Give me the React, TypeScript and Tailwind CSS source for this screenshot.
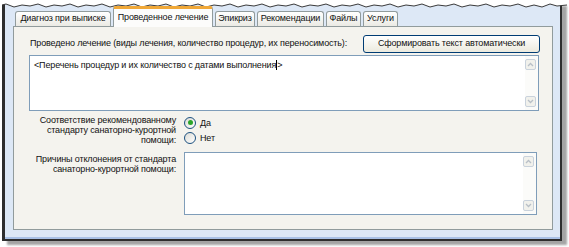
import React from "react";

const font = { fontFamily: '"Liberation Sans", Arial, sans-serif', letterSpacing: "-0.15px" };

function ScrollArrows() {
  return (
    <div className="w-[13px] flex flex-col justify-between py-[3px] pr-[1px] bg-[#fbfbf9]">
      <div className="w-[11px] h-[11px] rounded-[2px] border border-[#c9d2dc] bg-[#f1f1ec] flex items-center justify-center">
        <svg width="7" height="5" viewBox="0 0 7 5">
          <polyline points="1,4 3.5,1.5 6,4" fill="none" stroke="#b8bfc7" strokeWidth="1.3" />
        </svg>
      </div>
      <div className="w-[11px] h-[11px] rounded-[2px] border border-[#c9d2dc] bg-[#f1f1ec] flex items-center justify-center">
        <svg width="7" height="5" viewBox="0 0 7 5">
          <polyline points="1,1 3.5,3.5 6,1" fill="none" stroke="#b8bfc7" strokeWidth="1.3" />
        </svg>
      </div>
    </div>
  );
}

function Radio({ checked, label }: { checked?: boolean; label: string }) {
  return (
    <div className="flex items-center gap-[4px] h-[15px]">
      <div className="w-[12px] h-[12px] rounded-full border border-[#1c5180] bg-gradient-to-br from-[#dcdcd6] to-white flex items-center justify-center">
        {checked && <div className="w-[5px] h-[5px] rounded-full bg-[#2ba52b]" />}
      </div>
      <span className="text-[9px] leading-[10px] text-[#111]">{label}</span>
    </div>
  );
}

const tabs = [
  { t: "Диагноз при выписке", w: 96 },
  { t: "Проведенное лечение", w: 100, active: true },
  { t: "Эпикриз", w: 40 },
  { t: "Рекомендации", w: 67 },
  { t: "Файлы", w: 35 },
  { t: "Услуги", w: 35 },
];

export default function App() {
  return (
    <div className="w-[569px] h-[247px] bg-white overflow-hidden whitespace-nowrap" style={font}>
      <div className="ml-[2px] mt-[2px] w-[560px] h-[239px] relative border-l-[3px] border-r-[2px] border-b-[2px] border-[#2e2e2e] bg-[#dde8f6] shadow-[5px_4px_2px_#a4a4a4] flex flex-col">
        <svg className="absolute left-[-3px] top-0" width="565" height="7" viewBox="0 0 565 7">
          <polygon
            points="0,0 565,0 565,3 555,4 548,2 540,5 532,3 524,5 516,2 508,4 500,3 492,5 484,2 476,4 468,3 460,5 452,2 444,4 436,3 428,5 420,2 412,4 404,3 396,5 388,2 380,4 372,3 364,5 356,2 348,4 340,3 332,5 324,2 316,4 308,3 300,5 292,2 284,4 276,3 268,5 260,2 252,4 244,3 236,5 228,2 220,4 212,3 204,5 196,2 188,4 180,3 172,5 164,2 156,4 148,3 140,5 132,2 124,4 116,3 108,5 100,2 92,4 84,3 76,5 68,2 60,4 52,3 44,5 36,2 28,4 20,3 12,5 4,2 0,3"
            fill="white"
          />
          <polyline
            points="565,3 555,4 548,2 540,5 532,3 524,5 516,2 508,4 500,3 492,5 484,2 476,4 468,3 460,5 452,2 444,4 436,3 428,5 420,2 412,4 404,3 396,5 388,2 380,4 372,3 364,5 356,2 348,4 340,3 332,5 324,2 316,4 308,3 300,5 292,2 284,4 276,3 268,5 260,2 252,4 244,3 236,5 228,2 220,4 212,3 204,5 196,2 188,4 180,3 172,5 164,2 156,4 148,3 140,5 132,2 124,4 116,3 108,5 100,2 92,4 84,3 76,5 68,2 60,4 52,3 44,5 36,2 28,4 20,3 12,5 4,2 0,3"
            fill="none"
            stroke="#3a3a3a"
            strokeWidth="1"
          />
        </svg>
        <div className="flex-1 flex flex-col pl-[8px] pr-[7px] pt-[5px] pb-[7px] border-b-[2px] border-[#a9c1e6]">
          {/* Tabs */}
          <div className="flex items-end h-[19px] pl-[2px] gap-[2px] relative z-10">
            {tabs.map((tab) =>
              tab.active ? (
                <div
                  key={tab.t}
                  className="h-[21px] -mb-px bg-[#fcfcfb] border border-b-0 border-[#919b9c] rounded-t-[3px] border-t-[3px] border-t-[#f0a838] flex items-center justify-center text-[9px] text-[#111]"
                  style={{ width: tab.w }}
                >
                  {tab.t}
                </div>
              ) : (
                <div
                  key={tab.t}
                  className="h-[15px] bg-gradient-to-b from-white to-[#ebeae4] border border-b-0 border-[#919b9c] rounded-t-[3px] flex items-center justify-center text-[9px] text-[#111]"
                  style={{ width: tab.w }}
                >
                  {tab.t}
                </div>
              )
            )}
          </div>
          {/* Panel */}
          <div className="flex-1 border border-[#919b9c] bg-[#f4f3ee] px-[15px] pt-[8px] flex flex-col text-[9px] text-[#111]">
            <div className="flex items-center justify-between w-[511px]">
              <span className="ml-[1px]">Проведено лечение (виды лечения, количество процедур, их переносимость):</span>
              <div className="w-[177px] h-[18px] rounded-[3px] border border-[#003c74] bg-gradient-to-b from-white to-[#eceade] flex items-center justify-center">
                Сформировать текст автоматически
              </div>
            </div>
            <div className="mt-[2px] w-[510px] h-[56px] border border-[#7f9db9] bg-white flex">
              <div className="flex-1 pl-[4px] pt-[3px] leading-[12px]">
                &lt;Перечень процедур и их количество с датами выполнения
                <span className="inline-block w-px h-[10px] bg-black align-[-2px]" />&gt;
              </div>
              <ScrollArrows />
            </div>
            <div className="flex mt-[4px]">
              <div className="w-[147px] text-right leading-[10px]">
                Соответствие рекомендованному
                <br />
                стандарту санаторно-курортной
                <br />
                помощи:
              </div>
              <div className="ml-[8px] flex flex-col">
                <Radio checked label="Да" />
                <Radio label="Нет" />
              </div>
            </div>
            <div className="flex mt-[7px]">
              <div className="w-[147px] text-right leading-[10px] pt-[2px]">
                Причины отклонения от стандарта
                <br />
                санаторно-курортной помощи:
              </div>
              <div className="ml-[8px] w-[353px] h-[63px] border border-[#7f9db9] bg-white flex">
                <div className="flex-1" />
                <ScrollArrows />
              </div>
            </div>
          </div>
        </div>
      </div>
    </div>
  );
}
